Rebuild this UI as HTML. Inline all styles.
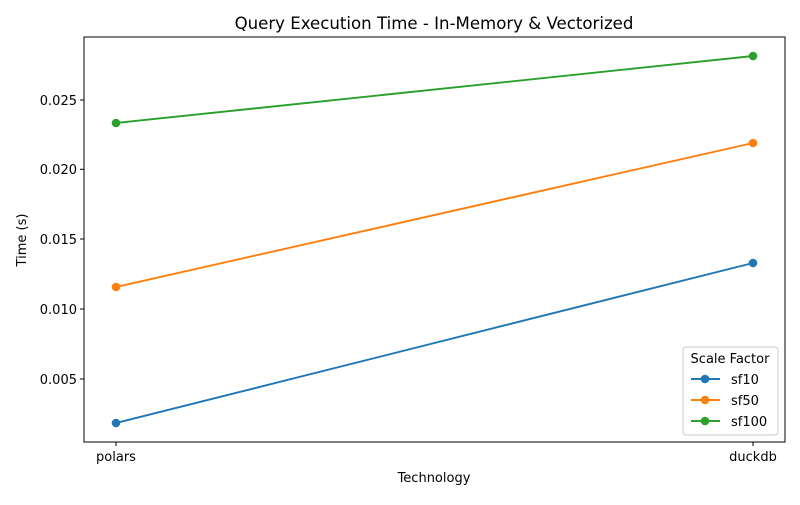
<!DOCTYPE html>
<html><head><style>body{margin:0;background:#fff}</style></head><body>
<svg width="800" height="500" xmlns="http://www.w3.org/2000/svg" font-family="DejaVu Sans, sans-serif">
<rect width="800" height="500" fill="#fff"/>
<text x="434" y="29" font-size="16.6" text-anchor="middle" fill="#000">Query Execution Time - In-Memory &amp; Vectorized</text>
<g stroke="#000" stroke-width="1">
<line x1="84" y1="100" x2="80" y2="100"/><line x1="84" y1="169.3" x2="80" y2="169.3"/><line x1="84" y1="239" x2="80" y2="239"/><line x1="84" y1="309" x2="80" y2="309"/><line x1="84" y1="379" x2="80" y2="379"/>
<line x1="116" y1="442" x2="116" y2="446"/><line x1="753" y1="442" x2="753" y2="446"/>
</g>
<g font-size="13" fill="#000" text-anchor="end">
<text x="77" y="105">0.025</text><text x="77" y="174">0.020</text><text x="77" y="244">0.015</text><text x="77" y="314">0.010</text><text x="77" y="384">0.005</text>
</g>
<g font-size="13" fill="#000" text-anchor="middle">
<text x="116" y="461">polars</text><text x="753" y="461">duckdb</text>
<text x="434" y="482">Technology</text>
<text transform="translate(26,240) rotate(-90)">Time (s)</text>
</g>
<g stroke-width="1.9">
<line x1="116" y1="423" x2="753" y2="263" stroke="#1f77b4"/>
<line x1="116" y1="287" x2="753" y2="143" stroke="#ff7f0e"/>
<line x1="116" y1="123" x2="753" y2="56" stroke="#2ca02c"/>
</g>
<circle cx="116" cy="423" r="4.3" fill="#1f77b4"/><circle cx="753" cy="263" r="4.3" fill="#1f77b4"/>
<circle cx="116" cy="287" r="4.3" fill="#ff7f0e"/><circle cx="753" cy="143" r="4.3" fill="#ff7f0e"/>
<circle cx="116" cy="123" r="4.3" fill="#2ca02c"/><circle cx="753" cy="56" r="4.3" fill="#2ca02c"/>
<rect x="84" y="37" width="701" height="405" fill="none" stroke="#000" stroke-width="1"/>
<rect x="683" y="347" width="95" height="88" rx="3" fill="#fff" fill-opacity="0.8" stroke="#ccc" stroke-width="1"/>
<text x="730" y="363" font-size="13" text-anchor="middle">Scale Factor</text>
<g stroke-width="1.9">
<line x1="691" y1="379" x2="720" y2="379" stroke="#1f77b4"/>
<line x1="691" y1="400" x2="720" y2="400" stroke="#ff7f0e"/>
<line x1="691" y1="421" x2="720" y2="421" stroke="#2ca02c"/>
</g>
<circle cx="705" cy="379" r="4.3" fill="#1f77b4"/><circle cx="705" cy="400" r="4.3" fill="#ff7f0e"/><circle cx="705" cy="421" r="4.3" fill="#2ca02c"/>
<g font-size="13"><text x="731" y="384">sf10</text><text x="731" y="405">sf50</text><text x="731" y="426">sf100</text></g>
</svg>
</body></html>
